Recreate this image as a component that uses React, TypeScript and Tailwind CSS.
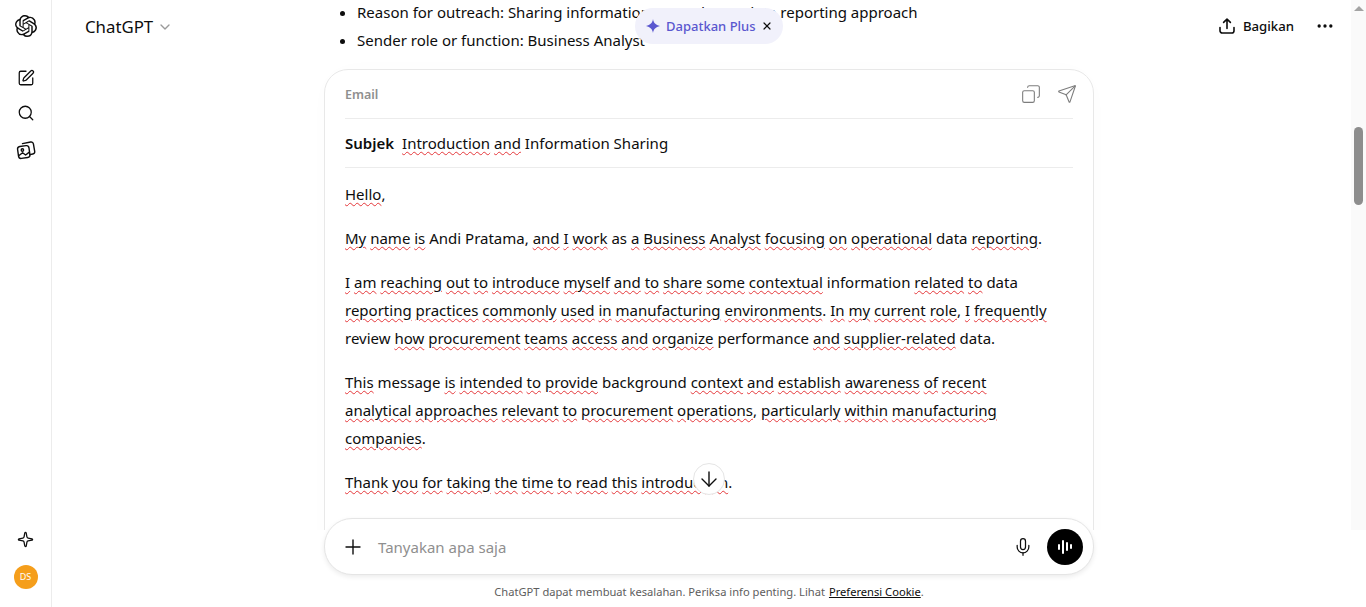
import { ArrowDown, ChevronDown, Copy, Ellipsis, Mic, Plus, Search, Send, Sparkle, SquarePen, X } from 'lucide-react';
import { SiOpenai } from 'react-icons/si';

// odd segments between ~ get the spell-check squiggle
const Spell = ({ text }: { text: string }) => (
  <>
    {text.split('~').map((part, i) =>
      i % 2 === 1 ? (
        <span key={i} className="underline decoration-wavy decoration-[#e5383b] decoration-1 underline-offset-2">
          {part}
        </span>
      ) : (
        <span key={i}>{part}</span>
      ),
    )}
  </>
);

const paragraphs = [
  '~Hello~,',
  '~My~ ~name~ ~is~ Andi Pratama, ~and~ ~I~ ~work~ as ~a~ ~Business~ ~Analyst~ ~focusing~ ~on~ ~operational~ data ~reporting~.',
  '~I~ ~am~ ~reaching~ ~out~ ~to~ ~introduce~ ~myself~ ~and~ ~to~ ~share~ ~some~ ~contextual~ information ~related~ ~to~ data\n~reporting~ ~practices~ ~commonly~ ~used~ ~in~ ~manufacturing~ ~environments~. ~In~ ~my~ ~current~ ~role~, ~I~ ~frequently~\nreview ~how~ ~procurement~ ~teams~ ~access~ ~and~ ~organize~ performance ~and~ ~supplier-related~ data.',
  '~This~ message ~is~ ~intended~ ~to~ ~provide~ background ~context~ ~and~ ~establish~ ~awareness~ ~of~ ~recent~\n~analytical~ ~approaches~ ~relevant~ ~to~ ~procurement~ ~operations~, ~particularly~ ~within~ ~manufacturing~\n~companies~.',
  '~Thank~ ~you~ ~for~ ~taking~ ~the~ ~time~ ~to~ ~read~ ~this~ ~introduction~.',
];

const LibraryIcon = () => (
  <svg width="20" height="20" viewBox="0 0 20 20" fill="none" stroke="currentColor" strokeWidth="1.4" strokeLinejoin="round" strokeLinecap="round">
    <rect x="2" y="6" width="11.5" height="12" rx="2.6" transform="rotate(-8 8 12)" />
    <path d="M6.5 3.6 14.6 2a2.4 2.4 0 0 1 2.8 1.9l1.3 7.4a2.4 2.4 0 0 1-1.9 2.7l-3 .6" />
    <circle cx="6.4" cy="10" r="1.2" />
    <path d="m3 15.5 3.6-2.7 3 2.2 3.400-2.600" />
  </svg>
);

const ShareIcon = () => (
  <svg width="18" height="18" viewBox="0 0 18 18" fill="none" stroke="currentColor" strokeWidth="1.6" strokeLinecap="round" strokeLinejoin="round">
    <path d="M9 11.5V2.2M5.6 5.4 9 2.1l3.4 3.3" />
    <path d="M2 10.5v3.2A2.3 2.3 0 0 0 4.3 16h9.4a2.3 2.3 0 0 0 2.3-2.3v-3.2" />
  </svg>
);

const SideBar = () => (
  <aside className="w-[52px] shrink-0 border-r border-[#ececec] flex flex-col items-center text-[#0d0d0d]">
    <SiOpenai size={22} className="mt-[15px]" />
    <SquarePen size={18} strokeWidth={1.7} className="mt-[32px]" />
    <Search size={18} strokeWidth={1.7} className="mt-[17px]" />
    <div className="mt-[18px] h-5">
      <LibraryIcon />
    </div>
    <Sparkle size={17} strokeWidth={1.8} className="mt-auto" />
    <div className="mt-[17px] mb-[18px] w-6 h-6 rounded-full bg-[#f59e1b] text-white text-[9px] flex items-center justify-center">
      DS
    </div>
  </aside>
);

const Conversation = () => (
  <div className="flex-1 min-h-0 overflow-hidden">
    <div className="w-[770px] mx-auto -mt-0.5">
      <ul className="list-disc pl-[33px] text-[15px] leading-7 text-[#0d0d0d]">
        <li>Reason for outreach: Sharing information around your data reporting approach</li>
        <li>Sender role or function: Business Analyst</li>
      </ul>
      <section className="mt-[15px] border border-[#e8e8e8] rounded-3xl px-5 shadow-[0_0_32px_rgba(0,0,0,0.012)]">
        <div className="h-[49px] flex items-center justify-between border-b border-[#ececec]">
          <span className="mt-0.5 text-[12.5px] font-semibold text-[#8f8f8f]">Email</span>
          <div className="flex items-center gap-4 -mr-[4px] text-[#7d7d7d]">
            <Copy size={20} strokeWidth={1.3} className="-scale-x-100" />
            <Send size={20} strokeWidth={1.3} />
          </div>
        </div>
        <div className="h-[49px] flex items-center gap-2 border-b border-[#ececec] text-[15px] text-[#0d0d0d]">
          <span className="font-semibold">Subjek</span>
          <span>
            <Spell text="~Introduction~ ~and~ Information Sharing" />
          </span>
        </div>
        <div className="pt-3 flex flex-col gap-4 text-[15px] leading-7 text-[#0d0d0d] pb-20">
          {paragraphs.map((p) => (
            <p key={p} className="whitespace-pre-line">
              <Spell text={p} />
            </p>
          ))}
        </div>
      </section>
    </div>
  </div>
);

const Composer = () => (
  <div className="relative z-10 -mt-3 bg-[linear-gradient(transparent_12px,white_12px)]">
    <div className="w-[770px] mx-auto h-[57px] rounded-[28px] bg-white border border-[#e5e5e5] shadow-[0_2px_5px_rgba(0,0,0,0.08)] flex items-center pl-4 pr-[10px]">
      <Plus size={24} strokeWidth={1.4} className="text-[#0d0d0d]" />
      <span className="ml-[13px] mt-0.5 text-[#8f8f8f] text-[15px]">Tanyakan apa saja</span>
      <Mic size={20} strokeWidth={1.5} className="ml-auto mr-[14px] text-[#0d0d0d]" />
      <div className="w-9 h-9 rounded-full bg-black flex items-center justify-center gap-[2px]">
        <span className="w-0.5 h-[6px] rounded-full bg-white" />
        <span className="w-0.5 h-[14px] rounded-full bg-white" />
        <span className="w-0.5 h-[9px] rounded-full bg-white" />
        <span className="w-0.5 h-[5px] rounded-full bg-white" />
      </div>
    </div>
    <p className="h-8 pt-0.5 flex items-center justify-center gap-1 text-[11.15px] text-[#5d5d5d]">
      ChatGPT dapat membuat kesalahan. Periksa info penting. Lihat
      <span>
        <span className="underline text-[#0d0d0d]">Preferensi Cookie</span>.
      </span>
    </p>
  </div>
);

const ScrollBar = () => (
  <div className="absolute right-0 top-0 bottom-0 w-[15px] bg-[#fafafa] flex flex-col items-center">
    <div className="mt-[6px] w-0 h-0 border-x-[5px] border-x-transparent border-b-[5px] border-b-[#a3a3a3]" />
    <div className="mt-[116px] w-[9px] h-[78px] rounded-full bg-[#8d8d8d]" />
    <div className="mt-auto mb-[6px] w-0 h-0 border-x-[5px] border-x-transparent border-t-[5px] border-t-[#a3a3a3]" />
  </div>
);

export default function App() {
  return (
    <div className="h-[607px] flex bg-white overflow-hidden font-['Noto_Sans',sans-serif]">
      <SideBar />
      <main className="relative flex-1 min-w-0 flex flex-col">
        <Conversation />
        <Composer />

        {/* top bar floats over the scrolled text */}
        <div className="absolute top-0 left-0 right-0 h-[52px] flex items-center pl-[33px] pr-[31px] text-[#0d0d0d]">
          <span className="mt-0.5 text-[16.8px]">ChatGPT</span>
          <ChevronDown size={16} className="ml-1 mt-0.5 text-[#9a9a9a]" />
          <div className="ml-auto flex items-center">
            <ShareIcon />
            <span className="ml-[7px] mt-0.5 text-[13.2px] font-medium">Bagikan</span>
            <Ellipsis size={20} className="ml-[21px]" />
          </div>
        </div>

        <div className="absolute top-2 left-1/2 -translate-x-1/2 h-9 w-[148px] rounded-full bg-[#f1f1fb] flex items-center pl-[10px] text-[13px] font-medium whitespace-nowrap text-[#5a57cf]">
          <svg width="16" height="16" viewBox="0 0 16 16" fill="currentColor">
            <path d="M8 1c.6 3.900 2.600 6 7 7-4.400 1-6.400 3.100-7 7-.6-3.900-2.600-6-7-7 4.400-1 6.400-3.100 7-7Z" />
          </svg>
          <span className="ml-[5px] mt-0.5">Dapatkan Plus</span>
          <X size={12} strokeWidth={2.4} className="ml-auto mr-[10px] text-[#0d0d0d]" />
        </div>

        <div className="absolute bottom-[112px] left-1/2 -translate-x-1/2 w-8 h-8 rounded-full bg-white border border-[#e5e5e5] flex items-center justify-center text-[#0d0d0d]">
          <ArrowDown size={24} strokeWidth={1.4} />
        </div>

        <ScrollBar />
      </main>
    </div>
  );
}
